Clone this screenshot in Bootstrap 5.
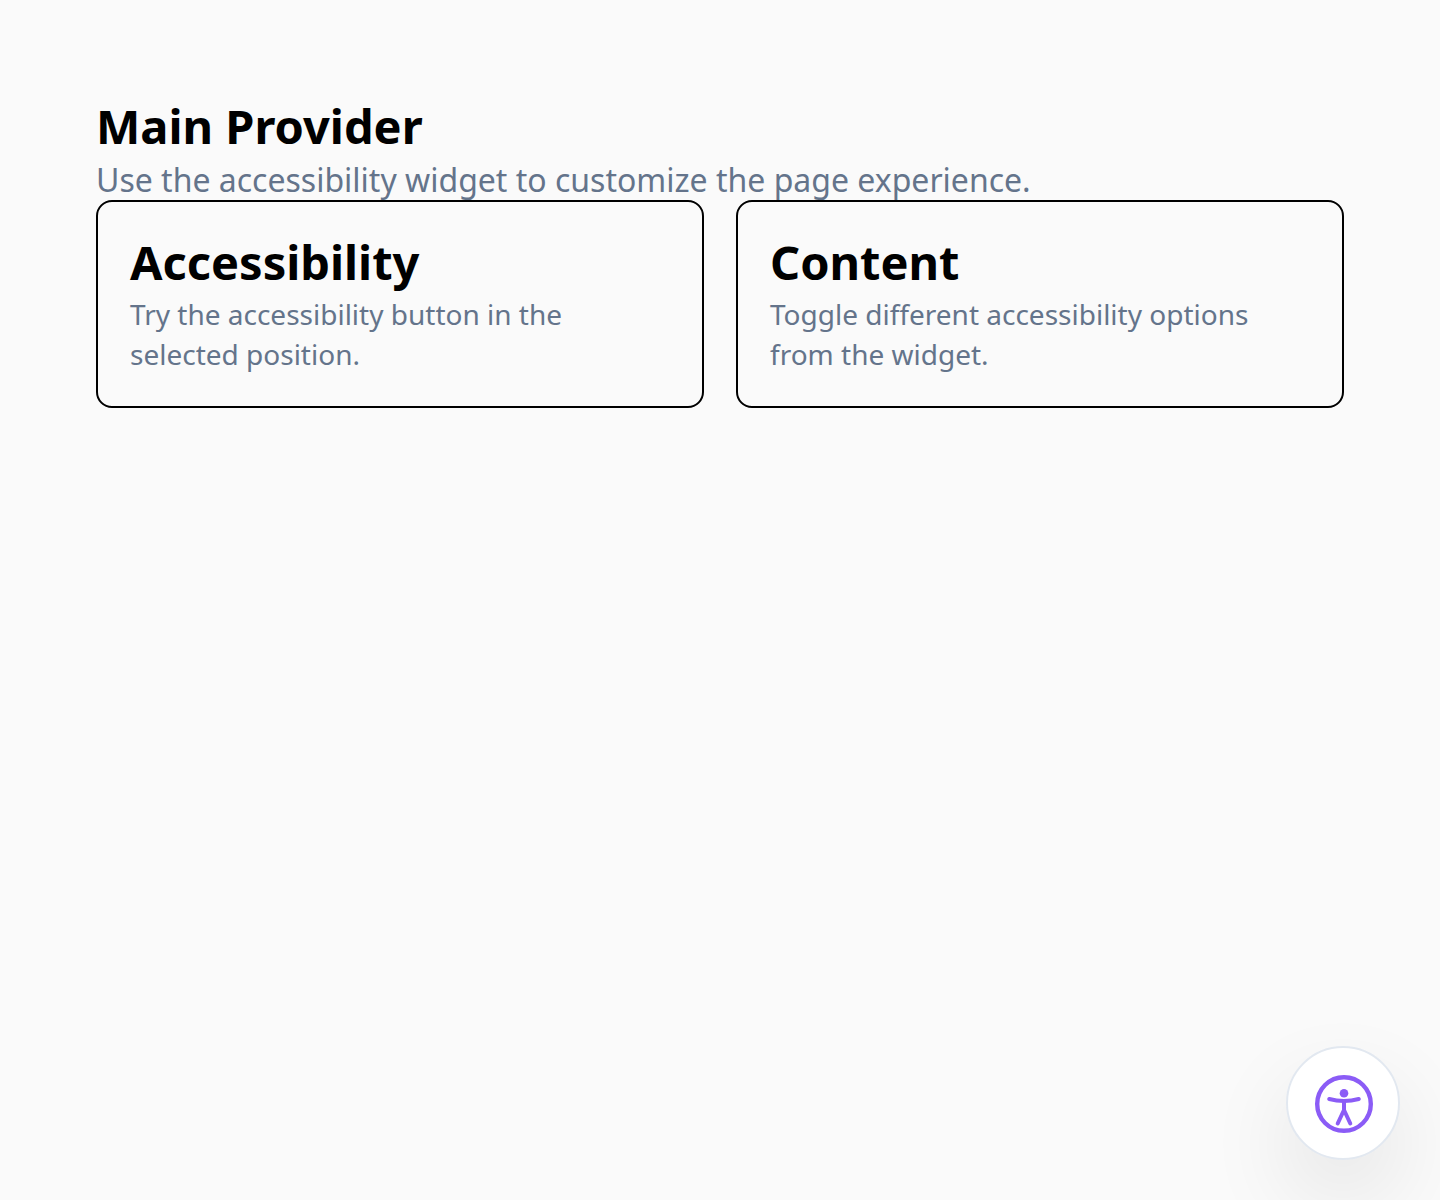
<!DOCTYPE html>
<html lang="en">
<head>
<meta charset="utf-8">
<meta name="viewport" content="width=device-width, initial-scale=1">
<title>Main Provider</title>
<link href="https://cdn.jsdelivr.net/npm/bootstrap@5.3.0/dist/css/bootstrap.min.css" rel="stylesheet">
<style>
  body { background: #fafafa; color: #000; font-family: "Noto Sans", sans-serif; }
  .page-main { padding: 96px; }
  .page-title, .panel-title { font-size: 47px; font-weight: 700; color: #000; }
  .page-title { line-height: 60px; }
  .panel-title { line-height: 56px; }
  .page-intro, .panel-text { color: #64748b; line-height: 40px; }
  .page-intro { font-size: 32px; }
  .panel-text { font-size: 28px; }
  .panel-grid { --bs-gutter-x: 32px; --bs-gutter-y: 32px; }
  .panel-box { padding: 32px; border: 2px solid #000; border-radius: 16px; }
  .access-btn { right: 40px; bottom: 40px; width: 114px; height: 114px; border: 2px solid #e2e8f0; background: #fff; color: #8b5cf6; box-shadow: 0 40px 90px rgba(0, 0, 0, .09); }
</style>
</head>
<body>
<main class="page-main">
  <h1 class="page-title mb-1">Main Provider</h1>
  <p class="page-intro mb-0">Use the accessibility widget to customize the page experience.</p>
  <div class="row row-cols-1 row-cols-md-2 panel-grid mt-0">
    <div class="col mt-0">
      <section class="panel-box h-100">
        <h2 class="panel-title mb-1">Accessibility</h2>
        <p class="panel-text mb-0">Try the accessibility button in the selected position.</p>
      </section>
    </div>
    <div class="col mt-0">
      <section class="panel-box h-100">
        <h2 class="panel-title mb-1">Content</h2>
        <p class="panel-text mb-0">Toggle different accessibility options from the widget.</p>
      </section>
    </div>
  </div>
</main>
<button type="button" class="access-btn position-fixed rounded-circle d-flex align-items-center justify-content-center p-0" aria-label="Accessibility options">
  <svg width="60" height="60" viewBox="0 0 60 60" fill="none" stroke="currentColor" stroke-width="4" stroke-linecap="round" stroke-linejoin="round" aria-hidden="true">
    <circle cx="31" cy="31" r="26.8" stroke-width="4.400"/>
    <circle cx="31" cy="20.2" r="4.3" fill="currentColor" stroke="none"/>
    <path d="M16.2 26Q31 30 45.8 26"/>
    <path d="M31 28.500V37L24.700 50.500M31 37L37.300 50.500"/>
  </svg>
</button>
<script src="https://cdn.jsdelivr.net/npm/bootstrap@5.3.0/dist/js/bootstrap.bundle.min.js"></script>
</body>
</html>
